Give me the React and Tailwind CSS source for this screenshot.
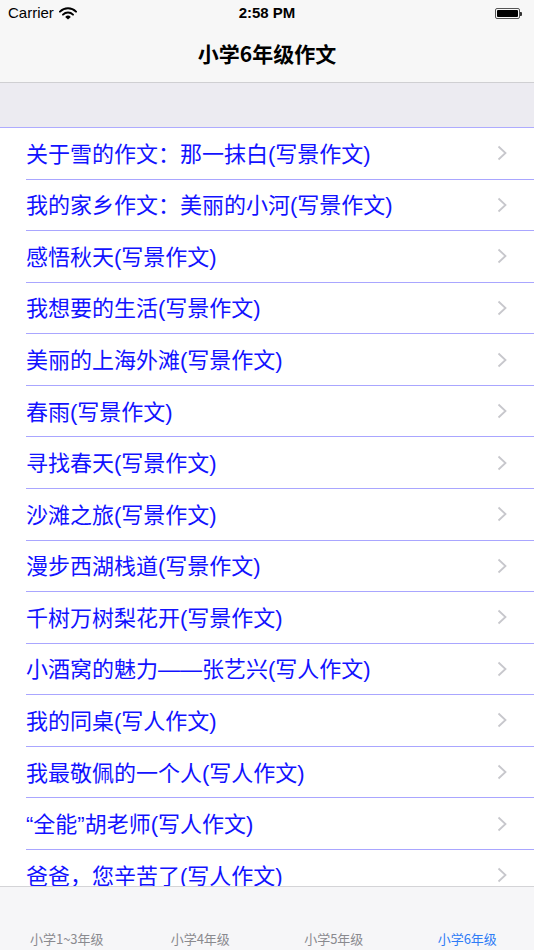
import React from "react";

const items = [
  "关于雪的作文：那一抹白(写景作文)",
  "我的家乡作文：美丽的小河(写景作文)",
  "感悟秋天(写景作文)",
  "我想要的生活(写景作文)",
  "美丽的上海外滩(写景作文)",
  "春雨(写景作文)",
  "寻找春天(写景作文)",
  "沙滩之旅(写景作文)",
  "漫步西湖栈道(写景作文)",
  "千树万树梨花开(写景作文)",
  "小酒窝的魅力——张艺兴(写人作文)",
  "我的同桌(写人作文)",
  "我最敬佩的一个人(写人作文)",
  "“全能”胡老师(写人作文)",
  "爸爸，您辛苦了(写人作文)",
];

const tabs = ["小学1~3年级", "小学4年级", "小学5年级", "小学6年级"];

const cjk = { fontFamily: '"Noto Sans CJK SC", "Noto Sans", sans-serif' };
const mixed = { fontFamily: '"Liberation Sans", "Noto Sans CJK SC", sans-serif' };

function Wifi() {
  return (
    <svg width="18" height="13" viewBox="0 0 18 13" className="ml-[5px]">
      <path d="M1 4.6 A11.5 11.5 0 0 1 17 4.6" fill="none" stroke="#000" strokeWidth="2" strokeLinecap="round" />
      <path d="M4 7.6 A7.2 7.2 0 0 1 14 7.6" fill="none" stroke="#000" strokeWidth="2" strokeLinecap="round" />
      <path d="M9 12.5 L6.2 9.9 A4 4 0 0 1 11.8 9.9 Z" fill="#000" />
    </svg>
  );
}

function Battery() {
  return (
    <div className="flex items-center">
      <div className="w-[25px] h-[11px] rounded-[2px] border border-[#555] p-[1px]">
        <div className="w-full h-full bg-black rounded-[1px]" />
      </div>
      <div className="w-[2px] h-[4px] bg-[#333] rounded-r-[1px]" />
    </div>
  );
}

function Chevron() {
  return (
    <svg width="10" height="16" viewBox="0 0 10 16">
      <path d="M1.5 1.5 L8.5 8 L1.5 14.5" fill="none" stroke="#c7c7cc" strokeWidth="1.8" />
    </svg>
  );
}

export default function App() {
  return (
    <div className="relative w-[534px] h-[950px] overflow-hidden bg-white">
      {/* status + navigation bar */}
      <div className="h-[83px] bg-[#f7f7f7] border-b border-[#cfcfd2] flex flex-col">
        <div className="h-[27px] px-[8px] flex items-center justify-between relative">
          <div className="flex items-center text-[15px] text-black" style={mixed}>
            <span>Carrier</span>
            <Wifi />
          </div>
          <div className="absolute left-0 right-0 top-0 h-[27px] flex items-center justify-center text-[15px] font-semibold text-black" style={mixed}>
            2:58 PM
          </div>
          <div className="pr-[4px]">
            <Battery />
          </div>
        </div>
        <div className="flex-1 flex items-center justify-center pb-[2px]">
          <span className="text-[21px] font-semibold text-black" style={cjk}>小学6年级作文</span>
        </div>
      </div>

      {/* section header */}
      <div className="h-[45px] bg-[#ecebf1] border-b border-[#aeabff]" />

      {/* list rows */}
      <div className="flex flex-col">
        {items.map((t) => (
          <div key={t} className="h-[51.57px] flex flex-col">
            <div className="flex-1 flex items-center pl-[26px] pr-[27px]">
              <span className="flex-1 pt-[3px] text-[22px] text-[#1212ff] leading-none" style={mixed}>{t}</span>
              <Chevron />
            </div>
            <div className="ml-[26px] h-px bg-[#a9a6ff]" />
          </div>
        ))}
      </div>

      {/* tab bar */}
      <div className="absolute left-0 right-0 bottom-0 h-[64px] bg-[#f6f6f8] border-t border-[#d4d4d7] grid grid-cols-4">
        {tabs.map((t, i) => (
          <div key={t} className="flex items-end justify-center pb-[2px]">
            <span
              className={i === 3 ? "text-[13px] leading-[18px] text-[#2f7cf6]" : "text-[13px] leading-[18px] text-[#8a8a8f]"}
              style={cjk}
            >
              {t}
            </span>
          </div>
        ))}
      </div>
    </div>
  );
}
